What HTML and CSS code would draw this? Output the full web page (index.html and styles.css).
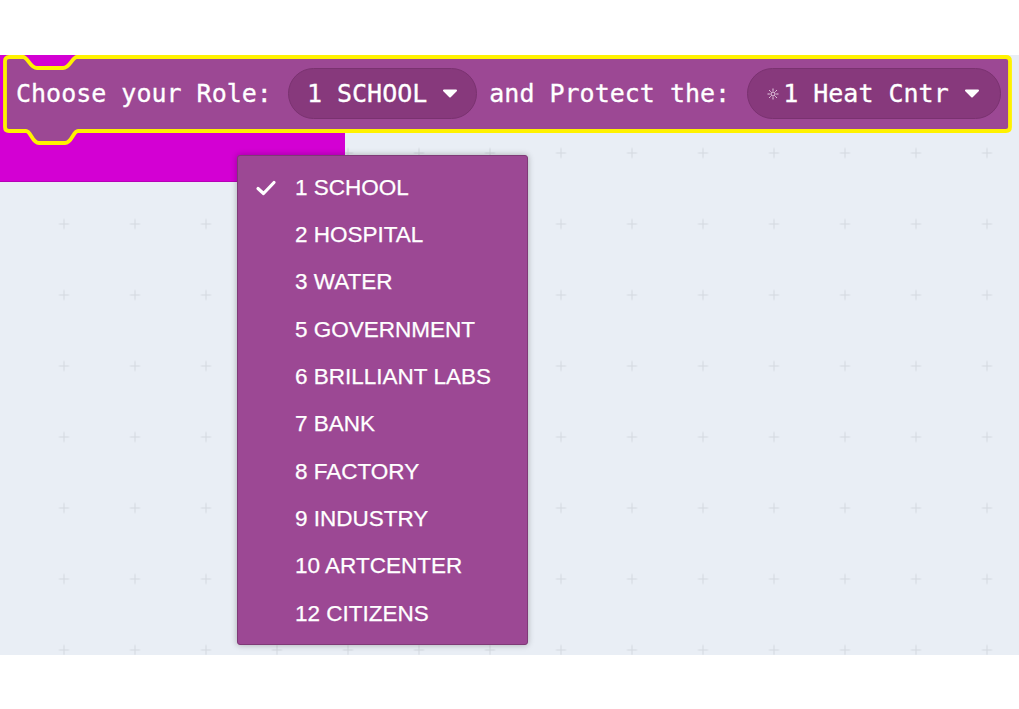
FILE: index.html
```html
<!DOCTYPE html>
<html lang="en">
<head>
<meta charset="utf-8">
<title>Choose your Role</title>
<link rel="stylesheet" href="styles.css">
</head>
<body>
<div class="page">
  <div class="workspace">
    <svg class="grid" width="100%" height="100%" aria-hidden="true">
      <defs>
        <pattern id="plus" patternUnits="userSpaceOnUse" x="28.5" y="62.5" width="71" height="71">
          <path d="M30.5 35.5 H40.5 M35.5 30.5 V40.5" stroke="#d3d8df" stroke-width="1" fill="none"/>
        </pattern>
      </defs>
      <rect width="100%" height="100%" fill="url(#plus)"/>
    </svg>

    <div class="hat-block"></div>

    <div class="block">
      <svg class="block-shape" width="1015" height="92" viewBox="0 0 1015 92" aria-hidden="true">
        <path d="M9 2 H23 C28 2 30 13 37 13 H63 C70 13 72 2 77 2 H1006 Q1010 2 1010 6 V72 Q1010 76 1006 76 H78 C73 76 72 88 65 88 H39 C32 88 31 76 26 76 H9 Q5 76 5 72 V6 Q5 2 9 2 Z"
              fill="#9c4894" stroke="#fff200" stroke-width="3.8" stroke-linejoin="round"/>
      </svg>
      <div class="block-row">
        <span class="label">Choose your Role:</span>
        <span class="pill pill-role">
          <span class="pill-text">1 SCHOOL</span>
          <svg class="caret" width="16" height="9" viewBox="0 0 16 9"><path d="M2 1.5 H14 L8 7.5 Z" fill="#fff" stroke="#fff" stroke-width="2" stroke-linejoin="round"/></svg>
        </span>
        <span class="label label-protect">and Protect the:</span>
        <span class="pill pill-target">
          <svg class="sun" width="12" height="12" viewBox="0 0 12 12" aria-hidden="true">
            <circle cx="6" cy="6" r="2" fill="none" stroke="#e8d0e4" stroke-width="1"/>
            <path d="M6 0.5 V2.8 M6 9.2 V11.5 M0.5 6 H2.8 M9.2 6 H11.5 M2.1 2.1 L3.7 3.7 M8.3 8.3 L9.9 9.9 M9.9 2.1 L8.3 3.7 M3.7 8.3 L2.1 9.9" stroke="#e8d0e4" stroke-width="1"/>
          </svg>
          <span class="pill-text">1 Heat Cntr</span>
          <svg class="caret" width="16" height="9" viewBox="0 0 16 9"><path d="M2 1.5 H14 L8 7.5 Z" fill="#fff" stroke="#fff" stroke-width="2" stroke-linejoin="round"/></svg>
        </span>
      </div>
    </div>

    <ul class="menu">
      <li class="item selected">
        <span class="check"><svg width="22" height="16" viewBox="0 0 22 16"><path d="M3 8.5 L8.5 13.5 L19 2.5" fill="none" stroke="#fff" stroke-width="3.2" stroke-linecap="round" stroke-linejoin="round"/></svg></span>
        <span class="item-text">1 SCHOOL</span>
      </li>
      <li class="item"><span class="check"></span><span class="item-text">2 HOSPITAL</span></li>
      <li class="item"><span class="check"></span><span class="item-text">3 WATER</span></li>
      <li class="item"><span class="check"></span><span class="item-text">5 GOVERNMENT</span></li>
      <li class="item"><span class="check"></span><span class="item-text">6 BRILLIANT LABS</span></li>
      <li class="item"><span class="check"></span><span class="item-text">7 BANK</span></li>
      <li class="item"><span class="check"></span><span class="item-text">8 FACTORY</span></li>
      <li class="item"><span class="check"></span><span class="item-text">9 INDUSTRY</span></li>
      <li class="item"><span class="check"></span><span class="item-text">10 ARTCENTER</span></li>
      <li class="item"><span class="check"></span><span class="item-text">12 CITIZENS</span></li>
    </ul>
  </div>
</div>
</body>
</html>
```
FILE: styles.css
```css
html, body {
  margin: 0;
  padding: 0;
  background: #ffffff;
}

.page {
  padding-top: 55px;
  height: 654px;
}

.workspace {
  position: relative;
  height: 600px;
  background: #e9eef5;
  overflow: hidden;
}

.grid {
  position: absolute;
  left: 0;
  top: 0;
}

.hat-block {
  position: absolute;
  left: 0;
  top: 0;
  width: 345px;
  height: 126px;
  background: #d300d3;
  border-bottom: 1px solid #b700b7;
}

.block {
  position: absolute;
  left: 0;
  top: 0;
  width: 1015px;
  height: 92px;
}

.block-shape {
  position: absolute;
  left: 0;
  top: 0;
}

.block-row {
  position: relative;
  display: flex;
  align-items: center;
  height: 77px;
  padding-left: 16px;
  font-family: "DejaVu Sans Mono", "Liberation Mono", monospace;
  font-size: 25px;
  color: #ffffff;
  -webkit-text-stroke: 0.3px #ffffff;
  white-space: pre;
}

.label {
  line-height: 30px;
}

.pill {
  display: flex;
  align-items: center;
  box-sizing: border-box;
  height: 51px;
  border: 1px solid #7a3270;
  border-radius: 26px;
  background: #87397c;
}

.pill-role {
  margin-left: 16px;
  margin-right: 12px;
  padding: 0 18px 0 18px;
}

.pill-target {
  margin-left: 17px;
  padding: 0 20px 0 19px;
}

.pill-text {
  line-height: 30px;
}

.sun {
  margin-right: 4px;
}

.caret {
  margin-left: 15px;
}

.menu {
  position: absolute;
  left: 237px;
  top: 100px;
  width: 291px;
  height: 490px;
  box-sizing: border-box;
  margin: 0;
  padding: 8px 0 6px;
  list-style: none;
  background: #9c4894;
  border: 1px solid #7f3a77;
  border-radius: 3px;
  box-shadow: 0 0 6px rgba(0, 0, 0, 0.28);
  font-family: "Liberation Sans", Arial, sans-serif;
  font-size: 22.5px;
  color: #ffffff;
  -webkit-text-stroke: 0.25px #ffffff;
}

.item {
  display: flex;
  align-items: center;
  height: 47.33px;
  padding-left: 17px;
}

.check {
  display: flex;
  align-items: center;
  width: 22px;
  height: 16px;
  margin-right: 18px;
}

.item-text {
  line-height: 24px;
}
```
